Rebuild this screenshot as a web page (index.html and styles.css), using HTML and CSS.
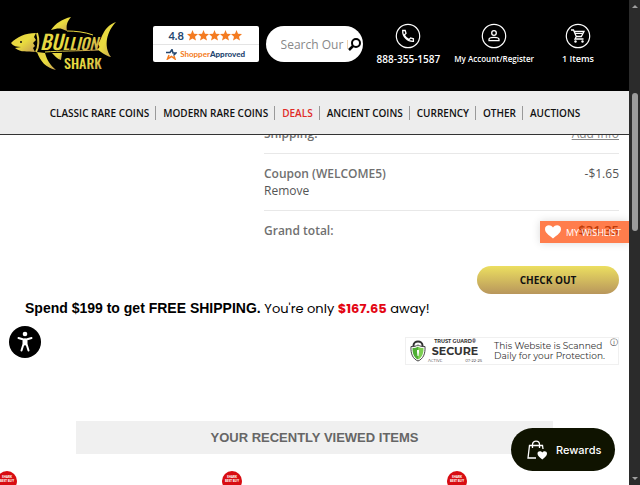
FILE: index.html
```html
<!DOCTYPE html>
<html lang="en">
<head>
    <meta charset="UTF-8">
    <meta name="viewport" content="width=device-width, initial-scale=1.0">
    <title>Shopping Cart - Bullion Shark</title>
    <link rel="stylesheet" href="styles.css">
</head>
<body>
    <div class="page">
        <!-- Header -->
        <header class="header">
            <div class="top-bar">
                <a href="#" class="logo" aria-label="Bullion Shark">
                    <svg width="101" height="56" viewBox="0 0 101 56">
                        <defs>
                            <linearGradient id="gold" x1="0" y1="0" x2="1" y2="1">
                                <stop offset="0" stop-color="#e5cf45"/>
                                <stop offset="0.5" stop-color="#e9dc3f"/>
                                <stop offset="1" stop-color="#c39a52"/>
                            </linearGradient>
                        </defs>
                        <path fill="url(#gold)" d="M0 26C6 20 14 16 25 16L23 20L25 23L22 26L24 29L22 31L24 35C16 34 10 36 4 31L10 30C6 30 2 29 0 26Z"/>
                        <path fill="none" stroke="url(#gold)" stroke-width="2" d="M26 16C28 22 28 30 25 35"/>
                        <path fill="url(#gold)" d="M40 13C45 6 51 2 60 0C56 5 55 8 56 14L51 12C48 11 44 12 40 13Z"/>
                        <path fill="url(#gold)" d="M26 35L34 36C36 43 39 48 45 53C35 51 29 44 26 35Z"/>
                        <path fill="url(#gold)" d="M41 36L51 36L50 43C46 42 44 39 41 36Z"/>
                        <path fill="url(#gold)" d="M87 27C91 23 91 10 105 5C96 14 92 29 100 40C94 39 90 34 85 32C89 32 89 29 87 27Z"/>
                        <path fill="none" stroke="url(#gold)" stroke-width="1" d="M56 14C64 14 74 15 82 18M34 35C48 34 66 34 87 33"/>
                        <circle cx="10" cy="25" r="1" fill="#111"/>
                        <text x="29" y="33" class="logo-name"><tspan class="logo-initial">BU</tspan>LLION</text>
                        <text x="53" y="52" class="logo-shark">SHARK</text>
                    </svg>
                </a>

                <a href="#" class="rating">
                    <span class="rating-score">
                        <b>4.8</b>
                        <svg width="56" height="11" viewBox="0 0 56 11" fill="#f47b20">
                            <path id="star" d="M5.5 0L7 3.8L11 4.1L8 6.7L9 10.6L5.5 8.4L2 10.6L3 6.7L0 4.1L4 3.8Z"/>
                            <use href="#star" x="11"/>
                            <use href="#star" x="22"/>
                            <use href="#star" x="33"/>
                            <use href="#star" x="44"/>
                        </svg>
                    </span>
                    <span class="rating-brand">
                        <svg width="11" height="11" viewBox="0 0 11 11" fill="none" stroke-width="1.5">
                            <path stroke="#24466f" d="M0 3.5H4L6 .5L7 4H10L7.5 6.5"/>
                            <path stroke="#f47b20" d="M3 6L1.5 10L5.5 7.5L9 10L8 7"/>
                        </svg>
                        <span class="rating-text"><span>Shopper</span>Approved</span>
                    </span>
                </a>

                <form class="search">
                    <input type="text" placeholder="Search Our Inventory" aria-label="Search our inventory">
                    <button type="submit" aria-label="Search">
                        <svg width="13" height="13" viewBox="0 0 13 13" fill="none" stroke="#000">
                            <circle cx="8" cy="5" r="4" stroke-width="2"/>
                            <path d="M5 8L1 12" stroke-width="2.5"/>
                        </svg>
                    </button>
                </form>

                <a href="#" class="top-link phone">
                    <svg width="26" height="26" viewBox="0 0 26 26" fill="none" stroke="#fff">
                        <circle cx="13" cy="13" r="11.7" stroke-width="1.2"/>
                        <path stroke-width="1.3" d="M7.7 7.5H10.2L11 10.4L9.3 12C10.4 14.2 11.8 15.6 14 16.7L15.6 15L18.4 15.8V18.3C12.5 18.6 7.4 13.5 7.7 7.5Z"/>
                    </svg>
                    <span>888-355-1587</span>
                </a>
                <a href="#" class="top-link account">
                    <svg width="26" height="26" viewBox="0 0 26 26" fill="none" stroke="#fff">
                        <circle cx="13" cy="13" r="11.7" stroke-width="1.2"/>
                        <circle cx="13" cy="10" r="2.3" stroke-width="1.3"/>
                        <path stroke-width="1.3" d="M8 17.7V16.5C8 13.7 18 13.7 18 16.5V17.7Z"/>
                    </svg>
                    <span>My Account/Register</span>
                </a>
                <a href="#" class="top-link items">
                    <svg width="26" height="26" viewBox="0 0 26 26" fill="none" stroke="#fff">
                        <circle cx="13" cy="13" r="11.7" stroke-width="1.2"/>
                        <path stroke-width="1.3" d="M6 7H8.5L11.3 13.5H16.3L19 8.5H9M11.3 13.5L10 16H18.5"/>
                        <path stroke-width="1" d="M10 10.5H17.5"/>
                        <circle cx="10.5" cy="18.5" r="1.2" fill="#fff" stroke="none"/>
                        <circle cx="17.5" cy="18.5" r="1.2" fill="#fff" stroke="none"/>
                    </svg>
                    <span>1 Items</span>
                </a>
            </div>

            <nav class="nav">
                <a href="#">CLASSIC RARE COINS</a>
                <a href="#">MODERN RARE COINS</a>
                <a href="#" class="deals">DEALS</a>
                <a href="#">ANCIENT COINS</a>
                <a href="#">CURRENCY</a>
                <a href="#">OTHER</a>
                <a href="#">AUCTIONS</a>
            </nav>
        </header>

        <!-- Cart totals -->
        <main class="main">
            <section class="cart">
                <table class="totals">
                    <tr>
                        <th>Shipping:</th>
                        <td><a href="#" class="add-info">Add Info</a></td>
                    </tr>
                    <tr>
                        <th>Coupon (WELCOME5)<br><a href="#" class="remove">Remove</a></th>
                        <td>-$1.65</td>
                    </tr>
                    <tr>
                        <th>Grand total:</th>
                        <td class="grand">$31.35</td>
                    </tr>
                </table>
                <button class="checkout">CHECK OUT</button>
            </section>

            <p class="shipping-note"><b>Spend $199 to get FREE SHIPPING.</b> <span>You're only <strong>$167.65</strong> away!</span></p>

            <a href="#" class="trust">
                <svg width="16" height="22" viewBox="0 0 16 22">
                    <path fill="none" stroke="#333" stroke-width="2" d="M3.5 8V5.5C3.5 0 12.5 0 12.5 5.5V8"/>
                    <path fill="#fff" stroke="#444" d="M1 6.5C4 7 6 6 8 5C10 6 12 7 15 6.5C15.5 14 13 19 8 21C3 19 .5 14 1 6.5Z"/>
                    <path fill="#4fae35" d="M2.5 8C5 8 6.5 7.5 8 6.5V19.5C4 17.5 2.5 14 2.5 8Z"/>
                    <path fill="#7ccf51" d="M13.5 8C11 8 9.5 7.5 8 6.5V19.5C12 17.5 13.5 14 13.5 8Z"/>
                    <path fill="#fff" d="M7 10H9V12L8.5 16H7.5L7 12Z"/>
                </svg>
                <span class="trust-name">
                    <span class="trust-small">TRUST GUARD®</span>
                    <b>SECURE</b>
                    <span class="trust-status"><span>ACTIVE</span><span>07-22-25</span></span>
                </span>
                <span class="trust-text">This Website is Scanned<br>Daily for your Protection.</span>
                <span class="trust-info">ⓘ</span>
            </a>

            <h2 class="recent-title">YOUR RECENTLY VIEWED ITEMS</h2>
            <div class="recent-items">
                <div class="item"><span class="sale">SHARK<br>BEST BUY</span></div>
                <div class="item"><span class="sale">SHARK<br>BEST BUY</span></div>
                <div class="item"><span class="sale">SHARK<br>BEST BUY</span></div>
            </div>
        </main>

        <!-- Floating buttons -->
        <a href="#" class="wishlist">
            <svg width="16" height="14" viewBox="0 0 16 14">
                <path fill="#fff" d="M8 13.5C3 9.5 0 7.5 0 4C0 0 5.5-1 8 2.5C10.5-1 16 0 16 4C16 7.5 13 9.5 8 13.5Z"/>
            </svg>
            <span>MY WISHLIST</span>
        </a>
        <button class="accessibility" aria-label="Accessibility">
            <svg width="18" height="22" viewBox="0 0 18 22" fill="none" stroke="#fff" stroke-linecap="round" stroke-linejoin="round">
                <circle cx="9" cy="3" r="2.3" fill="#fff" stroke="none"/>
                <path stroke-width="2" d="M2.5 7L7.5 8.5H10.5L15.5 7M7.5 8.5V13L5.5 19.5M10.5 8.5V13L12.5 19.5"/>
                <path stroke-width="3" d="M9 9V13"/>
            </svg>
        </button>
        <button class="rewards">
            <svg width="20" height="20" viewBox="0 0 20 20" fill="none" stroke="#fff" stroke-width="1.3">
                <path d="M9 18H1L2.5 5.5H15.5L16 9"/>
                <path d="M5.5 8V4.5C5.5 0 12.5 0 12.5 4.5V8"/>
                <path fill="#fff" stroke="none" d="M15.3 19.5C12 17 10.5 15.5 10.5 13.5C10.5 11 14 10.5 15.3 12.6C16.6 10.5 20 11 20 13.5C20 15.5 18.5 17 15.3 19.5Z"/>
            </svg>
            <span>Rewards</span>
        </button>
    </div>

    <div class="scrollbar">
        <span class="arrow up"></span>
        <span class="thumb"></span>
        <span class="arrow down"></span>
    </div>
</body>
</html>
```
FILE: styles.css
```css
/* General Styling */
* {
    margin: 0;
    padding: 0;
    box-sizing: border-box;
}

body {
    display: flex;
    height: 100vh;
    overflow: hidden;
    background: #fff;
    color: #555;
    font-family: "Open Sans", "Noto Sans", sans-serif;
    font-size: 12px;
}

a {
    color: inherit;
    text-decoration: none;
}

button {
    border: none;
    cursor: pointer;
    font-family: inherit;
}

svg {
    display: block;
    flex-shrink: 0;
}

.page {
    position: relative;
    flex: 1;
    min-width: 0;
    overflow: hidden;
}

/* Header */
.header {
    position: relative;
    z-index: 2;
}

.top-bar {
    display: flex;
    align-items: flex-start;
    height: 91px;
    padding: 17px 35px 0 11px;
    background: #000;
}

.logo {
    width: 101px;
    margin-right: auto;
}

.logo svg {
    overflow: visible;
}

.logo text {
    fill: url(#gold);
    font-family: Oswald, "Liberation Sans", sans-serif;
    font-weight: 500;
}

.logo .logo-name {
    font-size: 16px;
    font-style: italic;
}

.logo .logo-initial {
    font-size: 20px;
}

.logo .logo-shark {
    font-size: 14px;
}

.rating {
    width: 106px;
    height: 36px;
    margin: 9px 7px 0 0;
    background: #fff;
    border-radius: 2px;
    color: #24466f;
}

.rating-score,
.rating-brand {
    display: flex;
    align-items: center;
    justify-content: center;
    height: 18px;
    gap: 3px;
}

.rating-score {
    height: 19px;
    border-bottom: 1px solid #e4e4e4;
    font-family: Lato, sans-serif;
    font-size: 11px;
}

.rating-text {
    font-family: Lato, sans-serif;
    font-size: 8px;
    font-weight: 900;
}

.rating-text span {
    color: #f47b20;
    font-weight: 700;
}

.search {
    display: flex;
    align-items: center;
    width: 97px;
    height: 36px;
    margin: 9px 14px 0 0;
    padding: 0 2px 0 15px;
    background: #fff;
    border-radius: 18px;
}

.search input {
    flex: 1;
    min-width: 0;
    border: none;
    outline: none;
    background: none;
    font-family: inherit;
    font-size: 12px;
}

.search input::placeholder {
    color: #888;
}

.search button {
    background: none;
}

.top-link {
    display: flex;
    flex-direction: column;
    align-items: center;
    gap: 4px;
    margin-top: 6px;
    color: #fff;
    font-size: 9px;
    font-weight: 600;
    line-height: 12px;
    white-space: nowrap;
}

.phone {
    margin-right: 14px;
    font-size: 10px;
}

.account {
    margin-right: 28px;
    font-size: 8px;
}

.nav {
    display: flex;
    align-items: center;
    justify-content: center;
    height: 44px;
    background: #ededed;
    border-bottom: 1px solid #333;
    color: #111;
    font-size: 10px;
    font-weight: 600;
    line-height: 14px;
}

.nav a {
    padding: 0 6px 0 7px;
    border-left: 1px solid #999;
}

.nav a:first-child {
    border-left: none;
}

.nav .deals {
    color: #e02b27;
}

/* Cart totals */
.main {
    margin-top: -10px;
}

.cart {
    margin: 0 10px 0 264px;
}

.totals {
    width: 100%;
    border-collapse: collapse;
    line-height: 17px;
}

.totals th,
.totals td {
    padding: 11px 0;
    border-top: 1px solid #e8e8e8;
    text-align: left;
    vertical-align: top;
}

.totals tr:first-child th,
.totals tr:first-child td {
    padding-top: 0;
    border-top: none;
}

.totals th {
    color: #707070;
    font-weight: 600;
}

.totals td {
    text-align: right;
}

.totals .grand {
    color: #222;
    font-size: 13px;
    font-weight: 600;
}

.totals .remove {
    color: #555;
    font-weight: normal;
}

.totals .add-info {
    color: #888;
    text-decoration: underline;
}

.checkout {
    display: block;
    width: 142px;
    height: 28px;
    margin: 16px 0 0 auto;
    border-radius: 14px;
    background: linear-gradient(#ecdf60, #b8965c);
    color: #111;
    font-size: 10px;
    font-weight: bold;
}

.shipping-note {
    margin: 4px 0 0 25px;
    color: #000;
    font-size: 14px;
    line-height: 20px;
}

.shipping-note b {
    font-family: "Liberation Sans", Arial, sans-serif;
}

.shipping-note span {
    font-family: Poppins, Inter, sans-serif;
    font-size: 13px;
}

.shipping-note strong {
    color: #e30613;
}

/* Trust badge */
.trust {
    display: flex;
    align-items: center;
    width: 214px;
    height: 28px;
    margin: 18px 10px 0 auto;
    padding-left: 4px;
    border: 1px solid #f0f0f0;
    color: #333;
    font-family: Montserrat, Inter, sans-serif;
}

.trust-name {
    display: flex;
    flex-direction: column;
    width: 54px;
    margin: 0 12px 0 2px;
    line-height: 7px;
    text-align: center;
}

.trust-name b {
    font-size: 11px;
    line-height: 12px;
}

.trust-small {
    font-size: 5px;
    font-weight: bold;
}

.trust-status {
    display: flex;
    justify-content: space-between;
    font-size: 4px;
}

.trust-text {
    font-size: 9px;
    line-height: 10px;
    white-space: nowrap;
}

.trust-info {
    align-self: flex-start;
    margin-left: auto;
    font-family: "DejaVu Sans", sans-serif;
    font-size: 8px;
    line-height: 9px;
}

/* Recently viewed */
.recent-title {
    margin: 56px 76px 17px;
    background: #f0f0f0;
    color: #666;
    font-family: "Liberation Sans", Arial, sans-serif;
    font-size: 13px;
    line-height: 33px;
    text-align: center;
}

.recent-items {
    display: grid;
    grid-template-columns: repeat(3, 225px);
    margin-left: -3px;
}

.sale {
    display: block;
    width: 20px;
    height: 20px;
    padding-top: 4px;
    border-radius: 50%;
    background: #d80d12;
    color: #fff;
    font-size: 3px;
    font-weight: bold;
    line-height: 4px;
    text-align: center;
    white-space: nowrap;
}

/* Floating buttons */
.wishlist {
    position: absolute;
    top: 221px;
    right: 0;
    display: flex;
    align-items: center;
    gap: 5px;
    width: 89px;
    height: 22px;
    padding-left: 5px;
    background: rgba(255, 70, 0, 0.7);
    box-shadow: 0 0 8px rgba(0, 0, 0, 0.15);
    color: #fff;
    font-size: 9px;
    white-space: nowrap;
}

.accessibility {
    position: absolute;
    top: 326px;
    left: 9px;
    display: flex;
    align-items: center;
    justify-content: center;
    width: 32px;
    height: 32px;
    border-radius: 50%;
    background: #000;
}

.rewards {
    position: absolute;
    right: 14px;
    bottom: 14px;
    display: flex;
    align-items: center;
    gap: 9px;
    width: 104px;
    height: 43px;
    padding-left: 16px;
    border-radius: 22px;
    background: #0f1300;
    color: #fff;
    font-family: Inter, sans-serif;
    font-size: 11px;
    font-weight: 500;
}

/* Scrollbar */
.scrollbar {
    display: flex;
    flex-direction: column;
    align-items: center;
    width: 11px;
    padding: 5px 0;
    background: #2b2b2b;
}

.thumb {
    width: 6px;
    height: 138px;
    margin-top: 85px;
    border-radius: 3px;
    background: #9b9b9b;
}

.arrow {
    border-left: 3px solid transparent;
    border-right: 3px solid transparent;
}

.arrow.up {
    border-bottom: 3px solid #a0a0a0;
}

.arrow.down {
    margin-top: auto;
    border-top: 3px solid #a0a0a0;
}
```
